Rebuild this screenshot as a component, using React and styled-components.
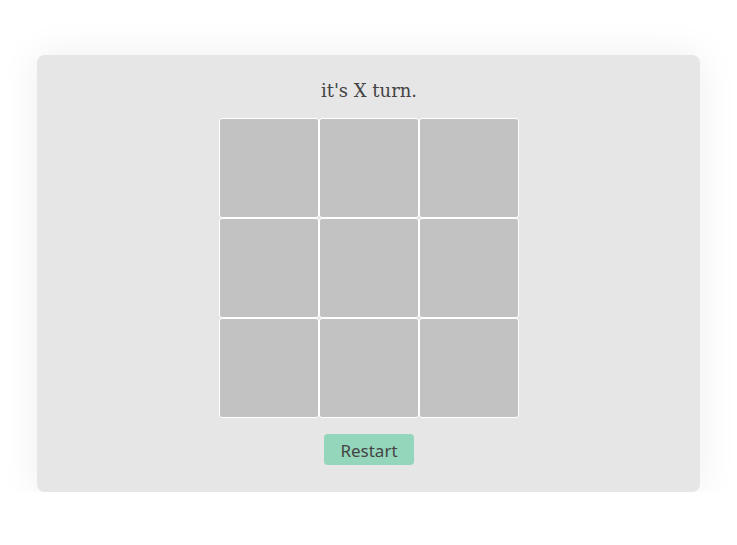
import React, { useState } from 'react';
import styled, { createGlobalStyle } from 'styled-components';

const GlobalStyle = createGlobalStyle`
  html, body {
    margin: 0;
    background: #ffffff;
  }
`;

const Page = styled.div`
  padding-top: 55px;
  display: flex;
  justify-content: center;
`;

const Panel = styled.div`
  width: 90%;
  box-sizing: border-box;
  background: #e6e6e6;
  border-radius: 8px;
  box-shadow: 0 0 40px rgba(0, 0, 0, 0.07);
  padding: 24px 0 27px 1px;
  display: flex;
  flex-direction: column;
  align-items: center;
`;

const Status = styled.h1`
  margin: 0 0 15px;
  font-family: "DejaVu Serif", serif;
  font-weight: normal;
  font-size: 18px;
  line-height: 24px;
  color: #444444;
`;

const Board = styled.div`
  display: grid;
  grid-template-columns: repeat(3, 100px);
  grid-template-rows: repeat(3, 100px);
`;

const Cell = styled.button`
  box-sizing: border-box;
  width: 100px;
  height: 100px;
  margin: 0;
  padding: 0;
  background: #c2c2c2;
  border: 1px solid #ffffff;
  border-radius: 3px;
  font-family: "DejaVu Sans", sans-serif;
  font-size: 48px;
  color: #444444;
  cursor: pointer;
`;

const RestartButton = styled.button`
  margin-top: 16px;
  width: 90px;
  height: 31px;
  padding: 1px 0 0;
  border: none;
  border-radius: 4px;
  background: #94d6bb;
  color: #444444;
  font-family: "Noto Sans", sans-serif;
  font-size: 17px;
  cursor: pointer;
`;

export default function App() {
  const [cells, setCells] = useState(Array(9).fill(null));
  const [turn, setTurn] = useState('X');

  const play = (i) => {
    if (cells[i]) return;
    const next = cells.slice();
    next[i] = turn;
    setCells(next);
    setTurn(turn === 'X' ? 'O' : 'X');
  };

  const restart = () => {
    setCells(Array(9).fill(null));
    setTurn('X');
  };

  return (
    <>
      <GlobalStyle />
      <Page>
        <Panel>
          <Status>it's {turn} turn.</Status>
          <Board>
            {cells.map((c, i) => (
              <Cell key={i} onClick={() => play(i)}>{c}</Cell>
            ))}
          </Board>
          <RestartButton onClick={restart}>Restart</RestartButton>
        </Panel>
      </Page>
    </>
  );
}
